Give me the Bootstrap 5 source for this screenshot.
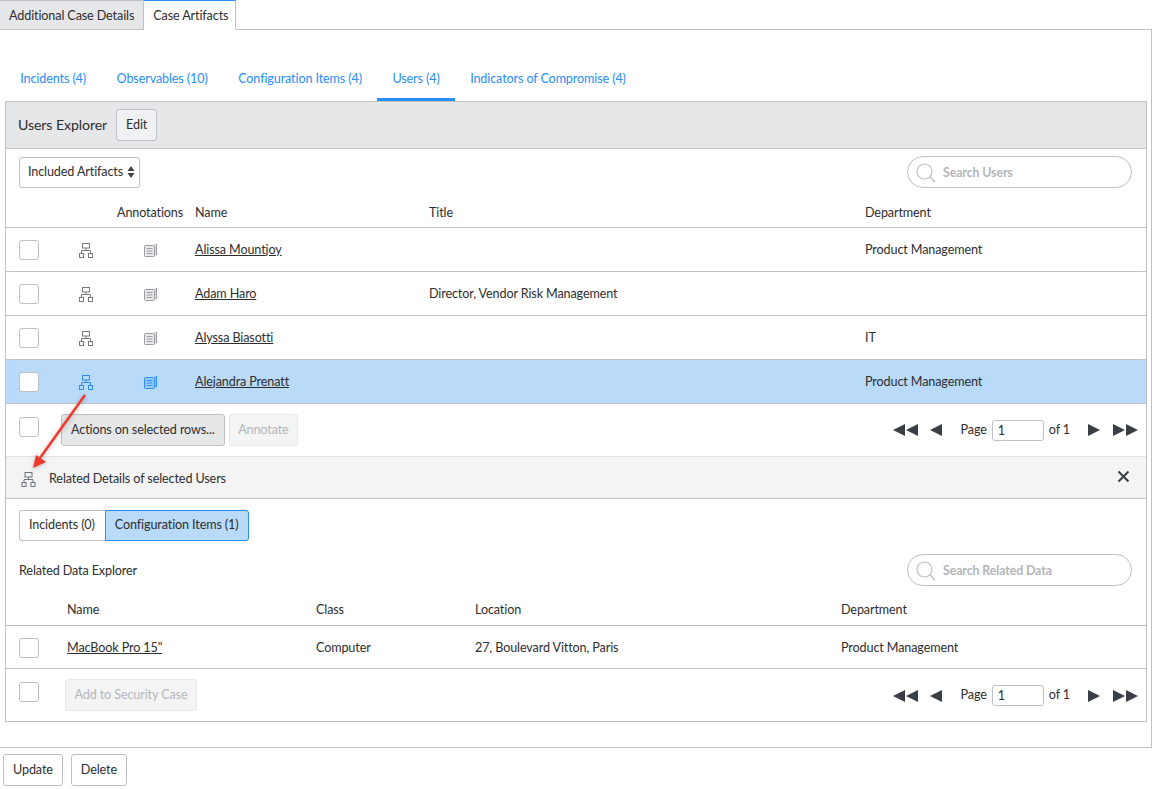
<!DOCTYPE html>
<html lang="en">
<head>
    <meta charset="UTF-8">
    <meta name="viewport" content="width=device-width, initial-scale=1.0">
    <title>Case Artifacts</title>
    <link rel="stylesheet" href="https://cdn.jsdelivr.net/npm/bootstrap@5.3.0/dist/css/bootstrap.min.css">
    <style>
        body { font-family: "Lato", "Liberation Sans", sans-serif; font-size: 12.6px; letter-spacing: -.12px; color: #2e2e2e; background: #fff; height: 789px; overflow: hidden; position: relative; }
        .case-tabs { height: 30px; margin-bottom: -1px; position: relative; }
        .case-tab { height: 30px; padding: 0 9px; line-height: 29px; border: 1px solid #bdc0c4; border-left: 0; background: #e6e7e9; }
        .case-tab.on { background: #fff; border-top: 1px solid #278efc; border-bottom-color: #fff; padding: 0 7px 0 9px; }
        .outer-box { width: 1153px; height: 719px; margin-left: -1px; border: 1px solid #bdc0c4; padding: 0 0 0 5px; }
        .sub-tabs { height: 71px; align-items: flex-end; }
        .sub-tab { display: block; height: 32px; padding: 1px 15.25px 0; color: #278efc; text-decoration: none; }
        .sub-tab.on { border-bottom: 3px solid #278efc; }
        .inner-box { width: 1142px; height: 621px; border: 1px solid #bdc0c4; }
        .explorer-bar { height: 47px; background: #e6e7e9; border-bottom: 1px solid #bdc0c4; padding: 0 12px; font-size: 14.2px; gap: 9px; }
        .plain-btn { font-size: 12.6px; color: #2e2e2e; padding: 0 9px; height: 32px; line-height: 30px; border: 1px solid #bdc0c4; border-radius: 3px; background: #fff; white-space: nowrap; }
        .explorer-bar .plain-btn { background: #f0f1f2; }
        .plain-btn.grey { background: #e6e7e9; }
        .plain-btn.off { background: #f4f4f5; border-color: #e6e7e9; color: #b4b6ba; padding: 0 8.5px; }
        .filter-btn { padding: 0 4px 0 8px; height: 31px; margin-top: -1px; }
        .filter-row { height: 47px; padding: 0 14px 0 13px; }
        .filter-row .search-pill { margin-top: -2px; }
        .search-pill { width: 225px; height: 32px; border: 1px solid #bdc0c4; border-radius: 16px; padding-left: 8px; gap: 7px; color: #b4b6ba; font-weight: 700; font-size: 12.4px; }
        .search-pill svg { margin-top: 2px; }
        .pill-label { padding-top: 4px; }
        .tick-box { display: block; width: 20px; height: 20px; border: 1px solid #bdc0c4; border-radius: 3px; background: #fff; }
        .art-table { table-layout: fixed; width: 1140px; margin: 0; border-collapse: collapse; }
        .art-table th { font-weight: 400; height: 32px; padding: 2px 0 0; vertical-align: middle; border-bottom: 1px solid #bdc0c4; color: #2e2e2e; }
        .user-table th { height: 31px; padding-top: 4px; }
        .art-table td { height: 44px; padding: 2px 0 0; vertical-align: middle; border-bottom: 1px solid #bdc0c4; background: transparent; color: #2e2e2e; }
        .art-table tr.picked td { background: #b9daf9; }
        .art-table a { color: #2e2e2e; }
        .rel-table td { height: 43px; }
        .pick-cell { padding-left: 13px !important; }
        .icon-cell { text-align: center; color: #777b80 !important; }
        .icon-cell svg, .note-cell svg { display: block; }
        .note-cell { padding-left: 34px !important; color: #9a9da1 !important; }
        .picked .icon-cell, .picked .note-cell { color: #2f8ff0 !important; }
        .note-head { padding-left: 7px !important; }
        .foot-row { height: 53px; padding: 0 8px 0 13px; border-bottom: 1px solid #e0e1e3; }
        .foot-row .tick-box { margin-top: -6px; }
        .rel-foot { border-bottom: 0; height: 52px; }
        .pager-box { padding-top: 1px; }
        .page-input { width: 52px; height: 21px; border: 1px solid #bdc0c4; border-radius: 3px; padding-left: 5px; line-height: 19px; margin: 0 5px; font-size: 12.6px; }
        .related-bar { height: 42px; background: #f4f4f4; border-bottom: 1px solid #bdc0c4; padding: 5px 16px 0 15px; }
        .related-title { gap: 13px; }
        .close-mark { margin-bottom: 6px; }
        .seg-row { padding: 11px 13px 0; }
        .seg-btn { height: 31px; line-height: 28px; padding: 0 9px; border: 1px solid #bdc0c4; background: #fff; color: #2e2e2e; }
        .seg-btn.left { border-radius: 3px 0 0 3px; border-right: 0; padding: 0 10px 0 9px; }
        .seg-btn.on { background: #b9daf9; border-color: #278efc; border-radius: 0 3px 3px 0; }
        .rel-title { height: 53px; padding: 5px 14px 0 13px; }
        .page-actions { padding: 6px 3px; gap: 8px; }
        .mark-arrow { position: absolute; left: 0; top: 0; pointer-events: none; filter: drop-shadow(0 1px 2px rgba(0,0,0,.25)); }
    </style>
</head>
<body>
    <svg width="0" height="0" class="position-absolute">
        <symbol id="tree" viewBox="0 0 14 15">
            <g fill="none" stroke="currentColor" stroke-width="1">
                <rect x="3.500" y=".5" width="7" height="4.500"/>
                <rect x=".5" y="10.500" width="4" height="4"/>
                <rect x="9.500" y="10.500" width="4" height="4"/>
                <path d="M7 5v2.500M2.500 10.500V7.500h9v3"/>
            </g>
        </symbol>
        <symbol id="note" viewBox="0 0 13 14">
            <path d="M10 1.500l2.500-1v11.500l-2 1.500z" fill="currentColor" opacity=".35"/>
            <rect x=".5" y="2.500" width="10" height="11" rx="1" fill="currentColor" fill-opacity=".22" stroke="currentColor"/>
            <path d="M2.500 5.500h6M2.500 8h6M2.500 10.500h6" stroke="currentColor"/>
            <path d="M12.500 1v11" stroke="currentColor" fill="none"/>
        </symbol>
        <symbol id="lens" viewBox="0 0 20 20">
            <circle cx="8.500" cy="8.500" r="7.500" fill="none" stroke="#bdc0c4" stroke-width="1.200"/>
            <path d="M14 14l5 5" stroke="#bdc0c4" stroke-width="1.600"/>
        </symbol>
        <symbol id="first" viewBox="0 0 25 12"><path d="M12 0v12L0 6zM25 0v12L13 6z" fill="#3a3f45"/></symbol>
        <symbol id="prev" viewBox="0 0 12 12"><path d="M12 0v12L0 6z" fill="#3a3f45"/></symbol>
        <symbol id="next" viewBox="0 0 12 12"><path d="M0 0v12l12-6z" fill="#3a3f45"/></symbol>
        <symbol id="last" viewBox="0 0 25 12"><path d="M0 0v12l12-6zM13 0v12l12-6z" fill="#3a3f45"/></symbol>
    </svg>

    <div class="case-tabs d-flex">
        <div class="case-tab">Additional Case Details</div>
        <div class="case-tab on">Case Artifacts</div>
    </div>
    <div class="outer-box">
        <div class="sub-tabs d-flex">
            <a class="sub-tab" href="#">Incidents (4)</a>
            <a class="sub-tab" href="#">Observables (10)</a>
            <a class="sub-tab" href="#">Configuration Items (4)</a>
            <a class="sub-tab on" href="#">Users (4)</a>
            <a class="sub-tab" href="#">Indicators of Compromise (4)</a>
        </div>
        <div class="inner-box">
            <div class="explorer-bar d-flex align-items-center">
                <span>Users Explorer</span>
                <span class="plain-btn">Edit</span>
            </div>
            <div class="filter-row d-flex align-items-center justify-content-between">
                <span class="plain-btn filter-btn d-flex align-items-center gap-1">Included Artifacts
                    <svg width="8" height="12" viewBox="0 0 8 12"><path d="M4 0l3.500 5h-7zM4 12L.5 7h7z" fill="#444"/></svg>
                </span>
                <div class="search-pill d-flex align-items-center">
                    <svg width="20" height="20"><use href="#lens"/></svg><span class="pill-label">Search Users</span>
                </div>
            </div>
            <table class="art-table user-table">
                <colgroup><col style="width:56px"><col style="width:48px"><col style="width:85px"><col style="width:234px"><col style="width:436px"><col></colgroup>
                <thead>
                    <tr><th></th><th></th><th class="note-head">Annotations</th><th>Name</th><th>Title</th><th>Department</th></tr>
                </thead>
                <tbody>
                    <tr>
                        <td class="pick-cell"><span class="tick-box"></span></td>
                        <td class="icon-cell"><svg width="14" height="15" class="mx-auto"><use href="#tree"/></svg></td>
                        <td class="note-cell"><svg width="13" height="14"><use href="#note"/></svg></td>
                        <td><a href="#">Alissa Mountjoy</a></td><td></td><td>Product Management</td>
                    </tr>
                    <tr>
                        <td class="pick-cell"><span class="tick-box"></span></td>
                        <td class="icon-cell"><svg width="14" height="15" class="mx-auto"><use href="#tree"/></svg></td>
                        <td class="note-cell"><svg width="13" height="14"><use href="#note"/></svg></td>
                        <td><a href="#">Adam Haro</a></td><td>Director, Vendor Risk Management</td><td></td>
                    </tr>
                    <tr>
                        <td class="pick-cell"><span class="tick-box"></span></td>
                        <td class="icon-cell"><svg width="14" height="15" class="mx-auto"><use href="#tree"/></svg></td>
                        <td class="note-cell"><svg width="13" height="14"><use href="#note"/></svg></td>
                        <td><a href="#">Alyssa Biasotti</a></td><td></td><td>IT</td>
                    </tr>
                    <tr class="picked">
                        <td class="pick-cell"><span class="tick-box"></span></td>
                        <td class="icon-cell"><svg width="14" height="15" class="mx-auto"><use href="#tree"/></svg></td>
                        <td class="note-cell"><svg width="13" height="14"><use href="#note"/></svg></td>
                        <td><a href="#">Alejandra Prenatt</a></td><td></td><td>Product Management</td>
                    </tr>
                </tbody>
            </table>
            <div class="foot-row d-flex align-items-center justify-content-between">
                <div class="d-flex align-items-center">
                    <span class="tick-box" style="margin-right:22px"></span>
                    <span class="plain-btn grey me-1">Actions on selected rows...</span>
                    <span class="plain-btn off">Annotate</span>
                </div>
                <div class="pager-box d-flex align-items-center">
                    <svg width="25" height="12" class="me-2"><use href="#first"/></svg>
                    <svg width="12" height="12" style="margin:0 19px 0 4px"><use href="#prev"/></svg>
                    <span>Page</span><span class="page-input">1</span><span>of 1</span>
                    <svg width="12" height="12" style="margin:0 10px 0 18px"><use href="#next"/></svg>
                    <svg width="25" height="12" style="margin-left:3px"><use href="#last"/></svg>
                </div>
            </div>
            <div class="related-bar d-flex align-items-center justify-content-between">
                <div class="related-title d-flex align-items-center"><svg width="15" height="15" class="text-secondary"><use href="#tree"/></svg>Related Details of selected Users</div>
                <svg width="13" height="13" viewBox="0 0 13 13" class="close-mark"><path d="M1.500 1.500l10 10M11.500 1.500l-10 10" stroke="#3a3f45" stroke-width="2"/></svg>
            </div>
            <div class="seg-row d-flex">
                <span class="seg-btn left">Incidents (0)</span><span class="seg-btn on">Configuration Items (1)</span>
            </div>
            <div class="rel-title d-flex align-items-center justify-content-between">
                <span class="pill-label">Related Data Explorer</span>
                <div class="search-pill d-flex align-items-center">
                    <svg width="20" height="20"><use href="#lens"/></svg><span class="pill-label">Search Related Data</span>
                </div>
            </div>
            <table class="art-table rel-table">
                <colgroup><col style="width:61px"><col style="width:249px"><col style="width:159px"><col style="width:366px"><col></colgroup>
                <thead><tr><th></th><th>Name</th><th>Class</th><th>Location</th><th>Department</th></tr></thead>
                <tbody>
                    <tr>
                        <td class="pick-cell"><span class="tick-box"></span></td>
                        <td><a href="#">MacBook Pro 15"</a></td><td>Computer</td><td>27, Boulevard Vitton, Paris</td><td>Product Management</td>
                    </tr>
                </tbody>
            </table>
            <div class="foot-row rel-foot d-flex align-items-center justify-content-between">
                <div class="d-flex align-items-center">
                    <span class="tick-box" style="margin-right:26px"></span>
                    <span class="plain-btn off">Add to Security Case</span>
                </div>
                <div class="pager-box d-flex align-items-center">
                    <svg width="25" height="12" class="me-2"><use href="#first"/></svg>
                    <svg width="12" height="12" style="margin:0 19px 0 4px"><use href="#prev"/></svg>
                    <span>Page</span><span class="page-input">1</span><span>of 1</span>
                    <svg width="12" height="12" style="margin:0 10px 0 18px"><use href="#next"/></svg>
                    <svg width="25" height="12" style="margin-left:3px"><use href="#last"/></svg>
                </div>
            </div>
        </div>
    </div>
    <div class="page-actions d-flex">
        <span class="plain-btn">Update</span>
        <span class="plain-btn">Delete</span>
    </div>

    <svg class="mark-arrow" width="1156" height="789">
        <path d="M85 395L40 458" stroke="#f0392b" stroke-width="2.500"/>
        <path d="M33 468l3-13 10 7z" fill="#f0392b"/>
    </svg>
</body>
</html>
